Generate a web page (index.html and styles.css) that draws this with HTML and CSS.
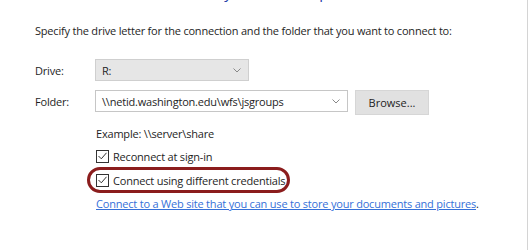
FILE: index.html
```html
<!DOCTYPE html>
<html lang="en">
<head>
    <meta charset="UTF-8">
    <meta name="viewport" content="width=device-width, initial-scale=1.0">
    <title>Map Network Drive</title>
    <link rel="stylesheet" href="styles.css">
</head>
<body>
    <div class="wizard">
        <h1 class="title">What network folder would you like to map?</h1>

        <p class="intro">Specify the drive letter for the connection and the folder that you want to connect to:</p>

        <div class="form">
            <div class="form-row">
                <label class="field-label">Drive:</label>
                <div class="combo combo-drive">
                    <span>R:</span>
                    <svg class="chevron" width="8" height="5" viewBox="0 0 8 5"><path d="M0.5 0.5 L4 4 L7.5 0.5" fill="none" stroke="#888" stroke-width="1"/></svg>
                </div>
            </div>
            <div class="form-row">
                <label class="field-label">Folder:</label>
                <div class="combo combo-folder">
                    <span>\\netid.washington.edu\wfs\jsgroups</span>
                    <svg class="chevron" width="8" height="5" viewBox="0 0 8 5"><path d="M0.5 0.5 L4 4 L7.5 0.5" fill="none" stroke="#888" stroke-width="1"/></svg>
                </div>
                <button class="browse">Browse...</button>
            </div>
        </div>

        <div class="options">
            <p class="example">Example: \\server\share</p>

            <div class="check first">
                <span class="box">
                    <svg width="9" height="8" viewBox="0 0 9 8"><path d="M0.5 4 L3.3 6.8 L8.5 0.8" fill="none" stroke="#333" stroke-width="1"/></svg>
                </span>
                <span>Reconnect at sign-in</span>
            </div>

            <div class="check highlighted">
                <span class="box">
                    <svg width="9" height="8" viewBox="0 0 9 8"><path d="M0.5 4 L3.3 6.8 L8.5 0.8" fill="none" stroke="#333" stroke-width="1"/></svg>
                </span>
                <span>Connect using different credentials</span>
            </div>

            <p class="web-link"><a href="#">Connect to a Web site that you can use to store your documents and pictures</a>.</p>
        </div>
    </div>
</body>
</html>
```

FILE: styles.css
```css
body {
    margin: 0;
    font-family: "Open Sans", "Noto Sans", sans-serif;
    font-size: 11px;
    letter-spacing: -0.2px;
    color: #1e1e1e;
    background: #fff;
}
.wizard {
    width: 492px;
    height: 250px;
    padding-left: 35px;
    border-right: 1px solid #d4d4d4;
    overflow: hidden;
}
.title {
    margin: -18px 0 0 0;
    font-size: 15px;
    font-weight: normal;
    color: #2340a8;
    line-height: 20px;
}
.intro {
    margin: 21px 0 0 0;
    line-height: 16px;
}
.form {
    margin-top: 20px;
    display: flex;
    flex-direction: column;
    gap: 8px;
}
.form-row {
    display: flex;
    align-items: flex-start;
}
.field-label {
    width: 60px;
    line-height: 22px;
    padding-top: 1px;
}
.combo {
    height: 22px;
    box-sizing: border-box;
    display: flex;
    align-items: center;
    justify-content: space-between;
    padding: 0 7px 0 6px;
    border: 1px solid #cfcfcf;
}
.combo-drive {
    width: 154px;
    background: #e6e6e6;
}
.combo-folder {
    width: 253px;
    background: #fff;
    border-color: #c6c6c6;
}
.browse {
    margin-left: 7px;
    width: 74px;
    height: 25px;
    font: inherit;
    color: #1e1e1e;
    background: #e1e1e1;
    border: 1px solid #d6d6d6;
    padding: 0;
}
.options {
    margin-left: 61px;
}
.example {
    margin: 11px 0 0 0;
    line-height: 16px;
}
.check {
    display: flex;
    align-items: center;
    gap: 4px;
    height: 16px;
    margin-top: 8px;
    position: relative;
}
.check.first {
    margin-top: 6px;
}
.box {
    width: 11px;
    height: 11px;
    border: 1px solid #333;
    display: flex;
    align-items: center;
    justify-content: center;
}
.highlighted::after {
    content: "";
    position: absolute;
    left: -9px;
    top: -5px;
    width: 197px;
    height: 20px;
    border: 3px solid #8b1d1d;
    border-radius: 13px;
}
.web-link {
    margin: 8px 0 0 0;
    line-height: 16px;
}
.web-link a {
    color: #3570d8;
}
```
